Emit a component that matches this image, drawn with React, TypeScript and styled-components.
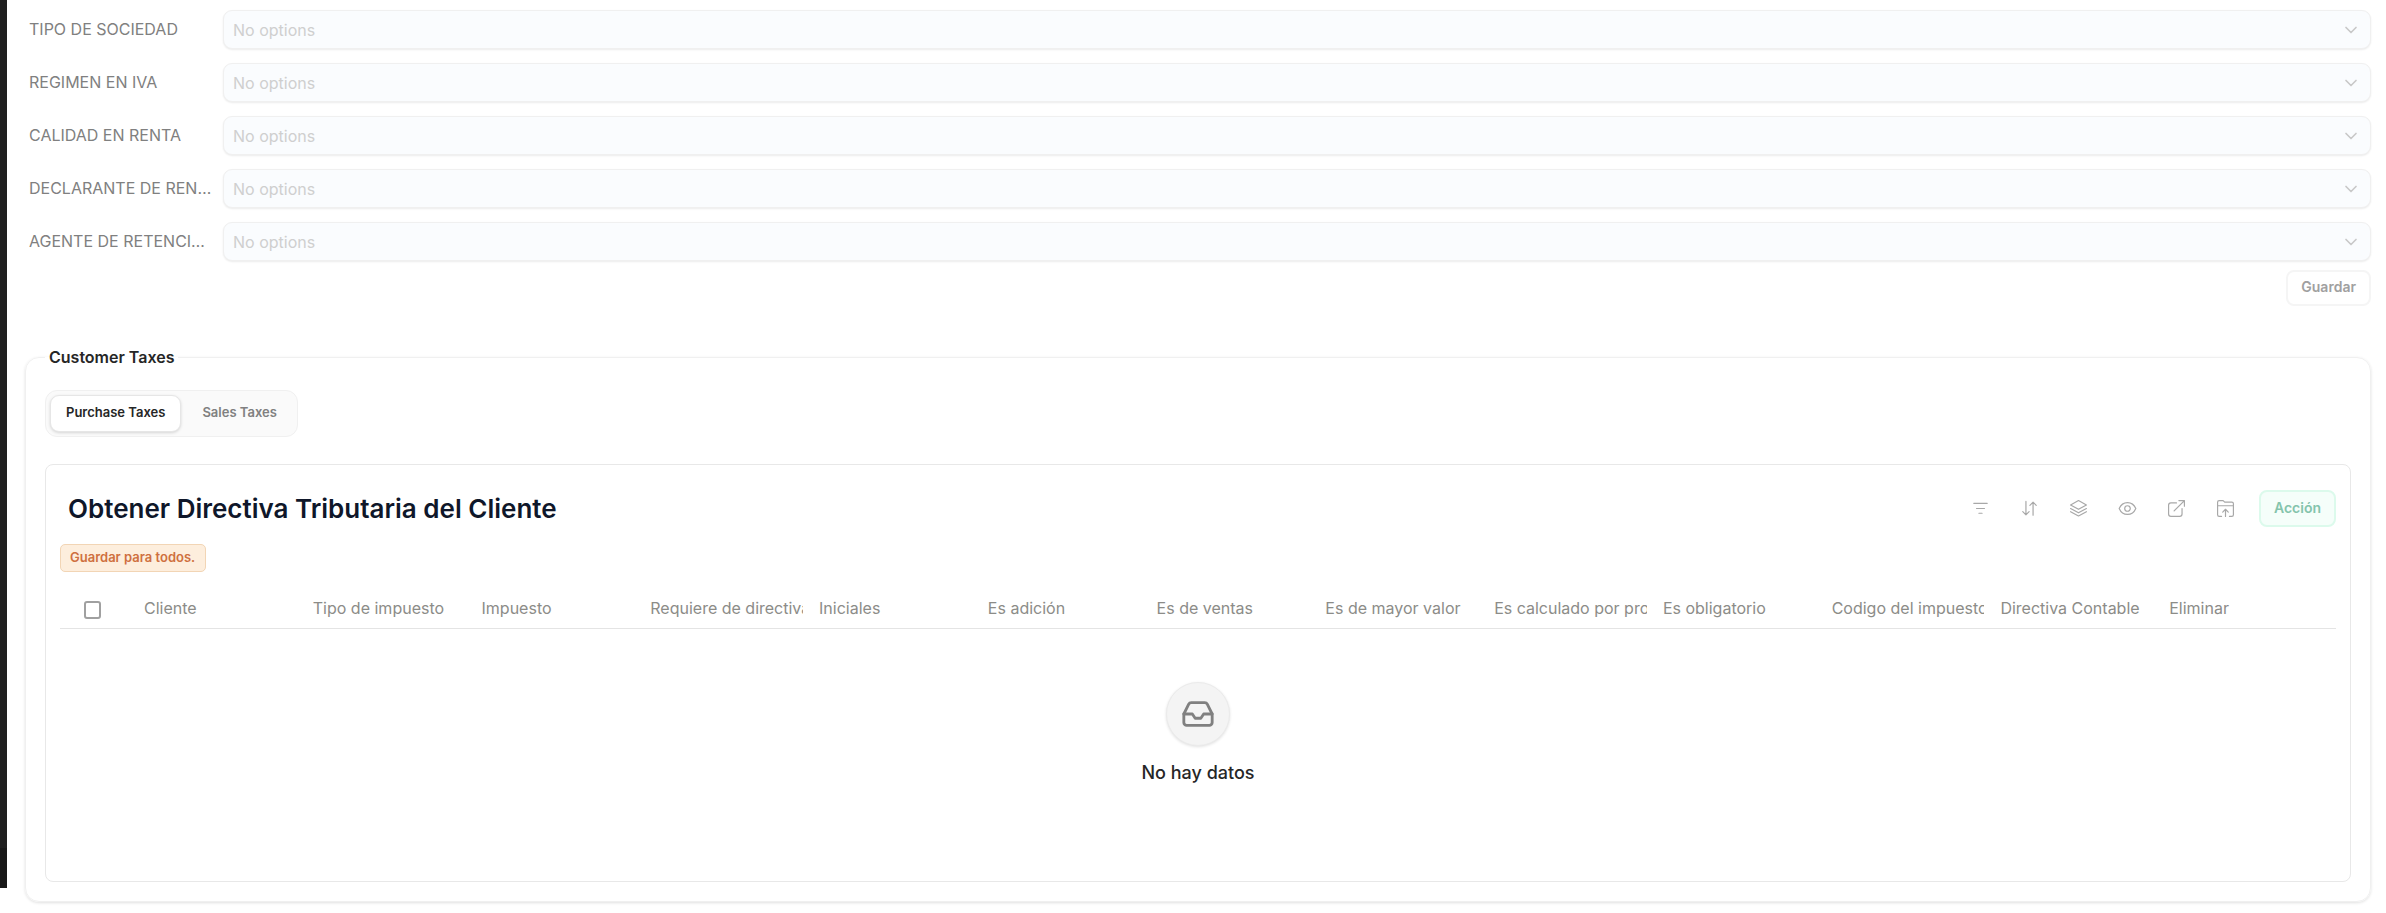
import React from 'react';
import styled, { createGlobalStyle } from 'styled-components';
import { ChevronDown, Inbox } from 'lucide-react';

const Global = createGlobalStyle`
  *, *::before, *::after { box-sizing: border-box; }
  body { margin: 0; background: #fff; font-family: Inter, "Liberation Sans", sans-serif; color: #262626; }
  button, select, input { font: inherit; }
`;

const Page = styled.div`
  display: flex;
  align-items: flex-start;
  min-height: 100vh;
`;

const Rail = styled.aside`
  flex: none;
  width: 7px;
  height: calc(100vh - 25px);
  background: #1f1f1f;
  border-bottom: 40px solid #181818;
`;

const Content = styled.main`
  flex: 1;
  min-width: 0;
  padding: 10px 15px 11px 18px;
`;

const Form = styled.form`
  display: flex;
  flex-direction: column;
  gap: 14px;
`;

const Field = styled.div`
  display: grid;
  grid-template-columns: 184px 1fr;
  column-gap: 10px;
  align-items: center;
  padding-left: 4px;
`;

const FieldLabel = styled.label`
  overflow: hidden;
  white-space: nowrap;
  text-overflow: ellipsis;
  font-size: 16px;
  line-height: 20px;
  color: #808080;
  padding-bottom: 2px;
`;

const SelectBox = styled.div`
  display: grid;
  align-items: center;
  & > * { grid-area: 1 / 1; }
  svg { justify-self: end; margin-right: 10px; color: #c8c8c8; pointer-events: none; }
`;

const Select = styled.select`
  appearance: none;
  width: 100%;
  height: 39px;
  padding: 0 9px;
  border: 1px solid #f0f0f0;
  border-radius: 9px;
  background: #fafcfe;
  box-shadow: 0 1px 2px rgba(0, 0, 0, 0.08);
  font-size: 16px;
  color: #cfcfcf;
  opacity: 1;
`;

const FormFooter = styled.div`
  display: flex;
  justify-content: flex-end;
  margin-top: -5px;
`;

const Button = styled.button<{ $accent?: boolean }>`
  height: ${p => (p.$accent ? 37 : 36)}px;
  padding: 0 13px 3px;
  border: 2px solid ${p => (p.$accent ? '#dcfaec' : '#f5f5f5')};
  border-radius: 8px;
  background: ${p => (p.$accent ? '#f5fefa' : '#fff')};
  color: ${p => (p.$accent ? '#84c4ac' : '#a0a0a0')};
  font-size: 14px;
  font-weight: 600;
`;

const Group = styled.fieldset`
  min-width: 0;
  margin: 40px 0 0;
  padding: 22px 19px 19px;
  border: 1px solid #f0f0f0;
  border-radius: 14px;
  box-shadow: 0 1px 3px rgba(0, 0, 0, 0.12);
`;

const Legend = styled.legend`
  padding: 0 4px;
  font-size: 16px;
  line-height: 22px;
  font-weight: 600;
`;

const Tabs = styled.div`
  display: flex;
  width: fit-content;
  gap: 5px;
  padding: 4px;
  border: 1px solid #f0f0f0;
  border-radius: 12px;
  background: #fafafa;
`;

const Tab = styled.button<{ $active?: boolean }>`
  height: 37px;
  padding: 0 15px 3px;
  border: 1px solid ${p => (p.$active ? '#e6e6e6' : 'transparent')};
  border-radius: 9px;
  background: ${p => (p.$active ? '#fff' : 'transparent')};
  box-shadow: ${p => (p.$active ? '0 1px 3px rgba(0, 0, 0, 0.15)' : 'none')};
  color: ${p => (p.$active ? '#262626' : '#808080')};
  font-size: 13px;
  font-weight: 600;
`;

const Panel = styled.section`
  height: 418px;
  margin-top: 27px;
  padding: 25px 14px 24px;
  border: 1px solid #e8e8e8;
  border-radius: 8px;
`;

const PanelHeader = styled.header`
  display: flex;
  justify-content: space-between;
  align-items: center;
`;

const Title = styled.h2`
  margin: 0;
  padding-left: 8px;
  font-size: 26px;
  line-height: 37px;
  font-weight: 600;
  color: #0f172a;
`;

const Tools = styled.div`
  display: flex;
  align-items: center;
  gap: 24px;
`;

const IconRow = styled.div`
  display: flex;
  align-items: center;
  gap: 30px;
`;

const IconButton = styled.button`
  display: flex;
  padding: 0;
  border: 0;
  background: none;
  color: #a8a8a8;
`;

const Badge = styled.span`
  display: block;
  width: fit-content;
  margin-top: 17px;
  padding: 2px 10px 4px 9px;
  border: 1px solid #f2d5b5;
  border-radius: 5px;
  background: #fdeedd;
  color: #cf7040;
  font-size: 13px;
  line-height: 20px;
  font-weight: 600;
`;

const TableWrap = styled.div`
  margin-top: 19px;
  padding-right: 6px;
  border-bottom: 1px solid #e4e4e4;
`;

const Table = styled.table`
  width: 100%;
  table-layout: fixed;
  border-collapse: collapse;
`;

const Th = styled.th`
  height: 37px;
  padding: 0 8px 4px;
  text-align: left;
  font-size: 16px;
  line-height: 20px;
  font-weight: 400;
  color: #8c8c88;
`;

const CheckTh = styled(Th)`
  width: 76px;
  padding: 0 0 0 24px;
`;

const Clip = styled.div`
  overflow: hidden;
  white-space: nowrap;
`;

const Checkbox = styled.input`
  appearance: none;
  display: block;
  width: 17px;
  height: 18px;
  margin: 0;
  border: 2px solid #a0a0a0;
  border-radius: 3px;
`;

const Empty = styled.div`
  display: flex;
  flex-direction: column;
  align-items: center;
  gap: 16px;
  padding-top: 53px;
  font-size: 18px;
  line-height: 22px;
  font-weight: 500;
`;

const EmptyIcon = styled.div`
  display: grid;
  place-items: center;
  width: 64px;
  height: 64px;
  border: 1px solid #ebebeb;
  border-radius: 50%;
  background: #f4f4f4;
  box-shadow: 0 1px 3px rgba(0, 0, 0, 0.12);
  color: #808080;
`;

const fields = [
  'TIPO DE SOCIEDAD',
  'REGIMEN EN IVA',
  'CALIDAD EN RENTA',
  'DECLARANTE DE RENTA',
  'AGENTE DE RETENCION',
];

const columns = [
  'Cliente', 'Tipo de impuesto', 'Impuesto', 'Requiere de directiva', 'Iniciales', 'Es adición', 'Es de ventas',
  'Es de mayor valor', 'Es calculado por producto', 'Es obligatorio', 'Codigo del impuesto', 'Directiva Contable', 'Eliminar',
];

const tools = [
  { name: 'Filtrar', d: 'M3.500 5.500h17M7 12h10M10 18h4' },
  { name: 'Ordenar', d: 'M7.500 3v17M3.500 16l4 4 4-4M16.500 20.500V4M12.500 8l4-4 4 4' },
  { name: 'Agrupar', d: 'M12 2L2 7.500l10 5.500 10-5.500zM2 12l10 5.500L22 12M2 16l10 5.500L22 16' },
  { name: 'Mostrar', d: 'M1.500 12c2-4.700 6-7.500 10.500-7.500s8.500 2.800 10.500 7.500c-2 4.700-6 7.500-10.500 7.500S3.500 16.700 1.500 12zM15.500 12a3.500 3.500 0 1 1-7 0 3.500 3.500 0 0 1 7 0' },
  { name: 'Abrir', d: 'M12 5H5a3 3 0 0 0-3 3v11a3 3 0 0 0 3 3h11a3 3 0 0 0 3-3v-7M9 15L22 2M15 2h7v7' },
  { name: 'Exportar', d: 'M7 22H4a2 2 0 0 1-2-2V4a2 2 0 0 1 2-2h5l2 2h9a2 2 0 0 1 2 2v14a2 2 0 0 1-2 2h-3M2 8.500h20M12 22v-8M8.500 16.500l3.500-3.500 3.500 3.500' },
];

export default function App() {
  return (
    <>
      <Global />
      <Page>
        <Rail />
        <Content>
          <Form>
            {fields.map((name, i) => (
              <Field key={name}>
                <FieldLabel htmlFor={`field-${i}`}>{name}</FieldLabel>
                <SelectBox>
                  <Select id={`field-${i}`} disabled><option>No options</option></Select>
                  <ChevronDown size={20} />
                </SelectBox>
              </Field>
            ))}
            <FormFooter><Button type="button">Guardar</Button></FormFooter>
          </Form>
          <Group>
            <Legend>Customer Taxes</Legend>
            <Tabs role="tablist">
              <Tab role="tab" aria-selected="true" $active>Purchase Taxes</Tab>
              <Tab role="tab" aria-selected="false">Sales Taxes</Tab>
            </Tabs>
            <Panel>
              <PanelHeader>
                <Title>Obtener Directiva Tributaria del Cliente</Title>
                <Tools>
                  <IconRow>
                    {tools.map(t => (
                      <IconButton key={t.name} aria-label={t.name}>
                        <svg width="19" height="19" viewBox="0 0 24 24" fill="none" stroke="currentColor" strokeWidth="1.5" strokeLinecap="round" strokeLinejoin="round">
                          <path d={t.d} />
                        </svg>
                      </IconButton>
                    ))}
                  </IconRow>
                  <Button $accent>Acción</Button>
                </Tools>
              </PanelHeader>
              <Badge>Guardar para todos.</Badge>
              <TableWrap>
                <Table>
                  <thead>
                    <tr>
                      <CheckTh><Checkbox type="checkbox" aria-label="Seleccionar todo" /></CheckTh>
                      {columns.map(c => <Th key={c}><Clip>{c}</Clip></Th>)}
                    </tr>
                  </thead>
                </Table>
              </TableWrap>
              <Empty>
                <EmptyIcon><Inbox size={34} /></EmptyIcon>
                No hay datos
              </Empty>
            </Panel>
          </Group>
        </Content>
      </Page>
    </>
  );
}
